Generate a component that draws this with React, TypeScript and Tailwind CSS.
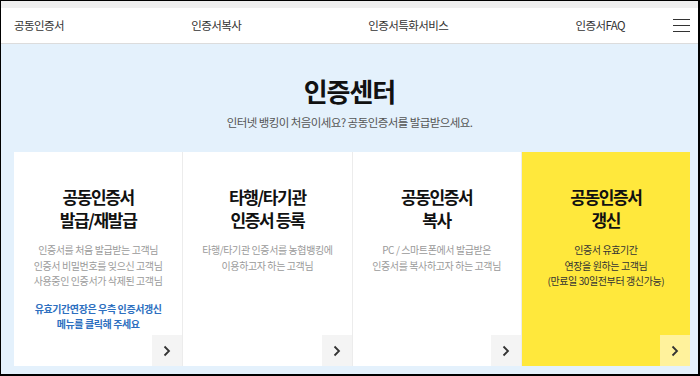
import React from "react";

type Card = {
  title: string[];
  desc: string[];
  note?: string[];
  yellow?: boolean;
};

const cards: Card[] = [
  {
    title: ["공동인증서", "발급/재발급"],
    desc: ["인증서를 처음 발급받는 고객님", "인증서 비밀번호를 잊으신 고객님", "사용중인 인증서가 삭제된 고객님"],
    note: ["유효기간연장은 우측 인증서갱신", "메뉴를 클릭해 주세요"],
  },
  {
    title: ["타행/타기관", "인증서 등록"],
    desc: ["타행/타기관 인증서를 농협뱅킹에", "이용하고자 하는 고객님"],
  },
  {
    title: ["공동인증서", "복사"],
    desc: ["PC / 스마트폰에서 발급받은", "인증서를 복사하고자 하는 고객님"],
  },
  {
    title: ["공동인증서", "갱신"],
    desc: ["인증서 유효기간", "연장을 원하는 고객님", "(만료일 30일전부터 갱신가능)"],
    yellow: true,
  },
];

const Chevron = () => (
  <svg width="8" height="12" viewBox="0 0 8 12" fill="none">
    <path d="M1.5 1.5L6 6l-4.5 4.5" stroke="#333" strokeWidth="1.8" />
  </svg>
);

const CertCard = ({ card }: { card: Card }) => (
  <div
    className={`relative flex flex-col items-center pt-[33px] text-center ${
      card.yellow ? "bg-[#ffe83c]" : "bg-white"
    }`}
  >
    <div className="text-[17px] font-bold leading-[23px] tracking-[-0.08em] text-[#111]">
      {card.title.map((t) => (
        <div key={t}>{t}</div>
      ))}
    </div>
    <div
      className={`mt-[11px] text-[10px] leading-[15.5px] tracking-[-0.04em] ${
        card.yellow ? "text-[#333]" : "text-[#9a9a9a]"
      }`}
    >
      {card.desc.map((t) => (
        <div key={t}>{t}</div>
      ))}
    </div>
    {card.note && (
      <div className="mt-[12px] text-[10px] font-bold leading-[15.5px] tracking-[-0.04em] text-[#2d6fbf]">
        {card.note.map((t) => (
          <div key={t}>{t}</div>
        ))}
      </div>
    )}
    <div
      className={`absolute right-0 bottom-0 flex h-[31px] w-[30px] items-center justify-center ${
        card.yellow ? "bg-[#fff29c]" : "bg-[#f4f4f4]"
      }`}
    >
      <Chevron />
    </div>
  </div>
);

export default function App() {
  return (
    <div
      className="flex h-[376px] w-[700px] flex-col overflow-hidden border-t border-r-2 border-b-2 border-l border-black bg-[#e4f1fc]"
      style={{ fontFamily: '"Noto Sans CJK KR", "Noto Sans", sans-serif' }}
    >
      <div className="h-[7px] bg-[#efefef]" />
      <div className="flex h-[36px] items-center border-b border-[#dcdcdc] bg-white pr-[8px] pl-[13px] text-[11.5px] tracking-[-0.05em] text-[#333]">
        <div className="flex flex-1 justify-between">
          <span>공동인증서</span>
          <span>인증서복사</span>
          <span>인증서특화서비스</span>
          <span>인증서FAQ</span>
        </div>
        <div className="ml-[48px] flex w-[17px] flex-col gap-[4.5px]">
          <div className="h-[1.5px] bg-[#333]" />
          <div className="h-[1.5px] bg-[#333]" />
          <div className="h-[1.5px] bg-[#333]" />
        </div>
      </div>
      <div className="flex flex-col items-center pt-[31px]">
        <h1 className="text-[26px] font-bold leading-[32px] tracking-[-0.04em] text-[#111]">인증센터</h1>
        <p className="mt-[7px] text-[11.5px] leading-[16px] tracking-[-0.05em] text-[#555]">
          인터넷 뱅킹이 처음이세요? 공동인증서를 발급받으세요.
        </p>
      </div>
      <div className="mt-[22px] ml-[13px] grid h-[214px] w-[676px] grid-cols-4 gap-px bg-[#ececec]">
        {cards.map((c, i) => (
          <CertCard key={i} card={c} />
        ))}
      </div>
    </div>
  );
}
